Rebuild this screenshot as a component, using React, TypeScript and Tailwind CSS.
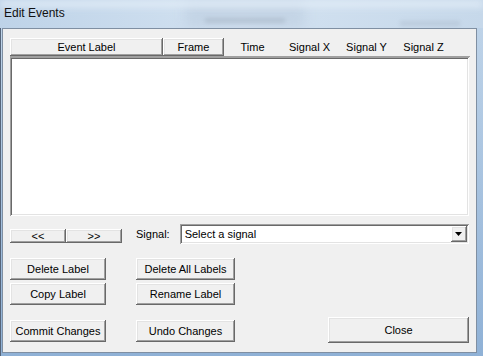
import React from 'react';

const raised =
  'bg-[#f0f0f0] shadow-[inset_-1px_-1px_0_#696969,inset_1px_1px_0_#ffffff,inset_-2px_-2px_0_#a0a0a0,inset_2px_2px_0_#e3e3e3]';
const sunken =
  'shadow-[inset_1px_1px_0_#a0a0a0,inset_-1px_-1px_0_#ffffff,inset_2px_2px_0_#696969,inset_-2px_-2px_0_#e3e3e3]';

const Btn: React.FC<{ label: string; className?: string }> = ({ label, className = '' }) => (
  <div className={`${raised} flex items-center justify-center text-[11px] text-black ${className}`}>
    {label}
  </div>
);

const columns = [
  { name: 'Event Label', w: 'w-[153px]', button: true },
  { name: 'Frame', w: 'w-[61px]', button: true },
  { name: 'Time', w: 'w-[57px]', button: false },
  { name: 'Signal X', w: 'w-[57px]', button: false },
  { name: 'Signal Y', w: 'w-[57px]', button: false },
  { name: 'Signal Z', w: 'w-[57px]', button: false },
];

export default function App() {
  return (
    <div
      className="w-[483px] h-[356px] overflow-hidden flex flex-col bg-gradient-to-b from-[#c2d6ea] to-[#8fb1d6]"
      style={{ fontFamily: '"Liberation Sans", Arial, sans-serif' }}
    >
      {/* Title bar */}
      <div className="relative h-[28px] shrink-0 bg-gradient-to-r from-[#bed3e8] via-[#d3e2f1] to-[#c6d8ea] overflow-hidden">
        <div className="absolute left-[185px] top-0 w-[120px] h-[28px] bg-[#bccddf] blur-[6px] opacity-60" />
        <div className="absolute left-[205px] top-[18px] w-[80px] h-[5px] bg-[#9aa8b8] blur-[2px] opacity-40" />
        <div className="absolute left-[400px] top-[21px] w-[60px] h-[5px] bg-[#a0aebf] blur-[2px] opacity-35" />
        <div className="absolute left-0 top-0 w-[483px] h-[8px] bg-[#e4eef8] blur-[3px] opacity-70" />
        <span className="absolute left-[4px] top-[7px] text-[12px] text-[#111] leading-none">Edit Events</span>
      </div>

      {/* Frame */}
      <div className="flex-1 flex pl-[1px] pr-[6px] pb-[3px] border-l border-[#56657a]">
        <div className="flex-1 flex flex-col bg-[#f0f0f0] border border-[#7f8fa2] px-[7px] pt-[9px]">
          {/* List view */}
          <div className="w-[459px] h-[178px] flex flex-col">
            <div className="flex h-[19px] shrink-0 w-[460px] border-b border-[#a0a0a0]">
              {columns.map((c) => (
                <div
                  key={c.name}
                  className={`${c.w} h-full flex items-center justify-center text-[11px] text-black ${
                    c.button ? raised : ''
                  }`}
                >
                  {c.name}
                </div>
              ))}
            </div>
            <div className={`flex-1 bg-white ${sunken}`} />
          </div>

          {/* Navigation + signal */}
          <div className="flex items-center mt-[8px] h-[20px]">
            <div className="flex self-end mb-[1px]">
              <Btn label="<<" className="w-[56px] h-[14px]" />
              <Btn label=">>" className="w-[56px] h-[14px]" />
            </div>
            <span className="ml-[14px] text-[11px] text-black">Signal:</span>
            <div className={`ml-[10px] w-[289px] h-[20px] bg-white ${sunken} flex items-center pl-[5px] pr-[2px]`}>
              <span className="flex-1 text-[11px] text-black">Select a signal</span>
              <div className={`${raised} w-[16px] h-[16px] flex items-center justify-center`}>
                <svg width="7" height="4" viewBox="0 0 7 4">
                  <path d="M0 0h7L3.5 4z" fill="#000" />
                </svg>
              </div>
            </div>
          </div>

          {/* Action buttons */}
          <div className="flex mt-[14px]">
            <div className="flex flex-col w-[96px]">
              <Btn label="Delete Label" className="h-[22px]" />
              <Btn label="Copy Label" className="h-[22px] mt-[3px]" />
              <Btn label="Commit Changes" className="h-[22px] mt-[15px]" />
            </div>
            <div className="flex flex-col w-[99px] ml-[30px]">
              <Btn label="Delete All Labels" className="h-[22px]" />
              <Btn label="Rename Label" className="h-[22px] mt-[3px]" />
              <Btn label="Undo Changes" className="h-[22px] mt-[15px]" />
            </div>
            <div className="flex flex-col justify-end ml-[93px]">
              <Btn label="Close" className="w-[141px] h-[26px] mb-[-1px]" />
            </div>
          </div>
        </div>
      </div>
    </div>
  );
}
